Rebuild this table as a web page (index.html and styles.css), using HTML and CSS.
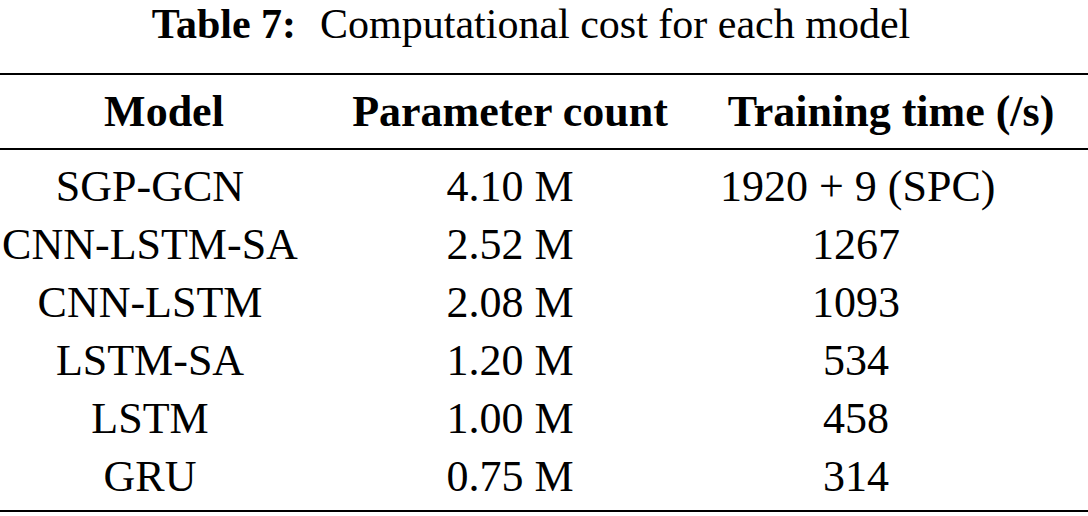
FILE: index.html
```html
<!DOCTYPE html>
<html>
<head>
<meta charset="utf-8">
<link rel="stylesheet" href="styles.css">
</head>
<body>
<div class="wrap">
  <div class="caption"><span class="label">Table 7:</span><span class="title">Computational cost for each model</span></div>
  <table class="cost">
    <thead>
      <tr><th class="c1">Model</th><th class="c2">Parameter count</th><th class="c3">Training time (/s)</th></tr>
    </thead>
    <tbody>
      <tr class="first"><td class="c1">SGP-GCN</td><td class="c2">4.10 M</td><td class="c3">1920 + 9 (SPC)</td></tr>
      <tr><td class="c1">CNN-LSTM-SA</td><td class="c2">2.52 M</td><td class="c3">1267</td></tr>
      <tr><td class="c1">CNN-LSTM</td><td class="c2">2.08 M</td><td class="c3">1093</td></tr>
      <tr><td class="c1">LSTM-SA</td><td class="c2">1.20 M</td><td class="c3">534</td></tr>
      <tr><td class="c1">LSTM</td><td class="c2">1.00 M</td><td class="c3">458</td></tr>
      <tr class="last"><td class="c1">GRU</td><td class="c2">0.75 M</td><td class="c3">314</td></tr>
    </tbody>
  </table>
</div>
</body>
</html>
```
FILE: styles.css
```css
html, body {
  margin: 0;
  padding: 0;
  background: #ffffff;
}
body {
  font-family: "Liberation Serif", "Times New Roman", serif;
  color: #000000;
}
.wrap {
  width: 1088px;
  padding-top: 2px;
}
.caption {
  text-align: center;
  font-size: 42px;
  line-height: 44px;
  height: 44px;
  margin-bottom: 27px;
  padding-right: 26px;
  white-space: nowrap;
}
.caption .label {
  font-weight: bold;
  margin-right: 24px;
}
.cost {
  width: 1088px;
  border-collapse: separate;
  border-spacing: 0;
  table-layout: fixed;
  font-size: 44px;
  line-height: 58px;
}
.cost th, .cost td {
  text-align: center;
  white-space: nowrap;
  padding: 0 26px;
  vertical-align: top;
}
.cost th.c1 { width: 300px; padding-left: 14px; padding-right: 12px; }
.cost th.c2 { width: 316px; }
.cost th.c3 { width: 342px; }
.cost td.c1 { padding-left: 0; padding-right: 26px; }
.cost td.c3 { padding-right: 96px; }
.cost th {
  font-weight: bold;
  border-top: 2px solid #000;
  border-bottom: 2px solid #000;
  padding-top: 8px;
  padding-bottom: 7px;
}
.cost tr.first td {
  padding-top: 8px;
}
.cost tr.last td {
  padding-bottom: 4px;
  border-bottom: 2px solid #000;
}
```
